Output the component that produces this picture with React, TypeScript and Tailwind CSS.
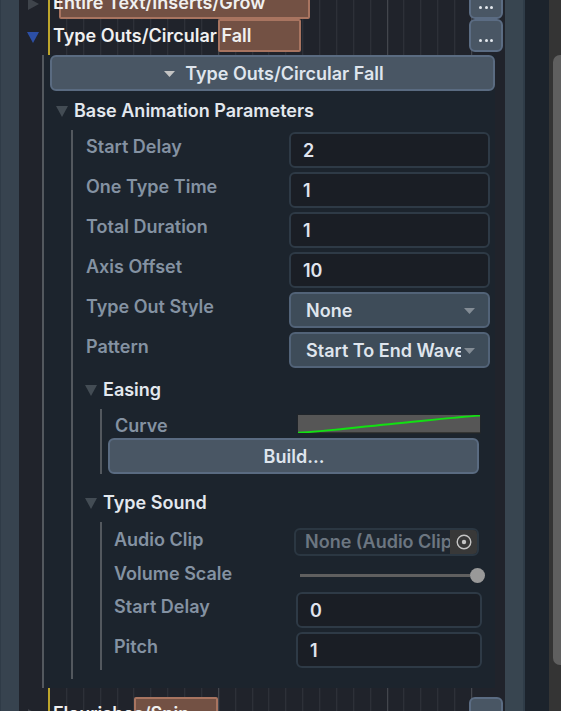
import type { ReactNode } from "react";
import clsx from "clsx";

const TICKS = 25;

function Grid() {
  return (
    <div className="absolute inset-y-0 left-[29px] flex w-[424px] border-l-2 border-[#bda52b]">
      {Array.from({ length: TICKS }).map((_, i) => (
        <div
          key={i}
          className={clsx(
            "flex-1",
            i === 9 || i === 19 || i === 24
              ? "border-r border-[#43464d] shadow-[1px_0_0_#282b33]"
              : "border-r border-[#2d3038] shadow-[1px_0_0_#24272f]"
          )}
        />
      ))}
    </div>
  );
}

function Arrow({ className, points, width, height }: { className: string; points: string; width: number; height: number }) {
  return (
    <svg className={clsx("shrink-0", className)} width={width} height={height} viewBox={`0 0 ${width} ${height}`}>
      <polygon points={points} fill="currentColor" />
    </svg>
  );
}

function MoreButton() {
  return (
    <div className="absolute top-0 right-0 flex h-full w-[34px] items-center justify-center gap-[2.5px] rounded-[6px] border-2 border-[#5b6c83] bg-[#495664] pt-2.5">
      <i className="size-[3px] rounded-full bg-[#e4e8ee]" />
      <i className="size-[3px] rounded-full bg-[#e4e8ee]" />
      <i className="size-[3px] rounded-full bg-[#e4e8ee]" />
    </div>
  );
}

interface TrackProps {
  name: string;
  open?: boolean;
  clipClass: string;
}

function Track({ name, open, clipClass }: TrackProps) {
  return (
    <div className="relative mr-[2px] h-[33px] shrink-0">
      <div className={clsx("absolute inset-y-0 rounded-[2px] border-2 border-[#a87460] bg-[#735144]", clipClass)} />
      <div className="relative flex h-full items-center pl-2">
        {open ? (
          <Arrow className="mt-1 text-[#2c4fa5]" width={12} height={11} points="0,0 12,0 6,11" />
        ) : (
          <Arrow className="mt-0.5 text-[#3f444b]" width={12} height={12} points="1,0 12,6 1,12" />
        )}
        <span className="ml-[14px] whitespace-nowrap text-[#f0f0f0]">{name}</span>
      </div>
      <MoreButton />
    </div>
  );
}

function Heading({ children }: { children: ReactNode }) {
  return (
    <div className="flex items-center gap-1.5 text-[#e3e8ee]">
      <Arrow className="text-[#434c54]" width={12} height={11} points="0,0 12,0 6,11" />
      {children}
    </div>
  );
}

function Row({ label, className, children }: { label: string; className?: string; children: ReactNode }) {
  return (
    <div className={clsx("flex justify-between", className ?? "h-[36px] pt-[3px]")}>
      <span className="leading-6 whitespace-nowrap text-[#8492a2]">{label}</span>
      {children}
    </div>
  );
}

function NumberField({ value, className }: { value: string; className: string }) {
  return (
    <div className={clsx("-mt-[3px] flex h-[36px] shrink-0 items-center rounded-[6px] border-2 border-[#2e3a46] bg-[#1a1e25] pt-0.5 pl-3 text-[#e0e4ee]", className)}>
      {value}
    </div>
  );
}

function Dropdown({ value }: { value: string }) {
  return (
    <div className="-mt-[3px] flex h-[36px] w-[201px] shrink-0 items-center rounded-[6px] border-2 border-[#526378] bg-[#3e4c59] pt-0.5 pl-[15px] text-[#dfe5ed]">
      <span className="w-[155px] overflow-hidden whitespace-nowrap">{value}</span>
      <Arrow className="-mt-px ml-[3px] text-[#838c95]" width={11} height={6} points="0,0 11,0 5.5,6" />
    </div>
  );
}

const fields = [
  ["Start Delay", "2"],
  ["One Type Time", "1"],
  ["Total Duration", "1"],
  ["Axis Offset", "10"],
];

export default function App() {
  return (
    <div className="flex h-[711px] w-[561px] overflow-hidden bg-[#1c232c] font-['Inter',sans-serif] text-[18px] leading-6 font-semibold">
      <div className="w-[19px] shrink-0 border-l border-[#2f3b47] bg-[#37434f]" />

      <div className="flex w-[486px] shrink-0 flex-col bg-[#20232b]">
        <div className="relative flex h-[55px] shrink-0 flex-col justify-end overflow-hidden pb-[3px]">
          <Grid />
          <Track name="Entire Text/Inserts/Grow" clipClass="left-[40px] w-[251px]" />
          <Track name="Type Outs/Circular Fall" open clipClass="left-[199px] w-[83px]" />
        </div>

        <div className="mr-[10px] ml-[23px] flex h-[633px] shrink-0 flex-col border-l-2 border-[#53585e] bg-[#1c242d] pl-1.5">
          <div className="flex h-[36px] shrink-0 items-center justify-center gap-[10px] rounded-[6px] border-2 border-[#5a6b81] bg-[#495664] pt-0.5 pl-[3px] text-[#dfe5ed]">
            <Arrow className="-mt-px text-[#c4c4c4]" width={11} height={6} points="0,0 11,0 5.5,6" />
            Type Outs/Circular Fall
          </div>
          <div className="mt-2 pl-1.5">
            <Heading>Base Animation Parameters</Heading>
          </div>

          <div className="mt-[7px] mr-[5px] ml-[21px] h-[549px] border-l-2 border-[#53585e] pt-0.5 pl-[13px]">
            <div className="flex flex-col gap-1">
              {fields.map(([label, value]) => (
                <Row key={label} label={label}>
                  <NumberField value={value} className="w-[201px]" />
                </Row>
              ))}
              <Row label="Type Out Style">
                <Dropdown value="None" />
              </Row>
              <Row label="Pattern">
                <Dropdown value="Start To End Wave" />
              </Row>
            </div>

            <div className="mt-[10px] -ml-px">
              <Heading>Easing</Heading>
            </div>
            <div className="mt-[7px] ml-[14px] h-[65px] border-l-2 border-[#53585e] pt-1">
              <Row label="Curve" className="h-[25px] pt-px pr-[10px] pl-[13px]">
                <svg className="mt-px bg-[#565656] shadow-[0_0_0_1px_#20252a]" width="182" height="18" viewBox="0 0 182 18">
                  <path d="M0 17.5H182" stroke="#343534" />
                  <path d="M0 17.7C25 16.5 60 12 91 9.2C125 6 155 2.5 182 0.6" fill="none" stroke="#12e012" strokeWidth="2" />
                </svg>
              </Row>
              <div className="mr-[11px] ml-1.5 flex h-[36px] items-center justify-center rounded-[6px] border-2 border-[#5a6b81] bg-[#495664] pt-0.5 pl-px text-[#dfe5ed]">
                Build...
              </div>
            </div>

            <div className="mt-[17px] -ml-px">
              <Heading>Type Sound</Heading>
            </div>
            <div className="mt-[7px] ml-[14px] h-[148px] border-l-2 border-[#53585e] pt-1.5 pl-[12px]">
              <Row label="Audio Clip" className="h-[30px] pr-[11px]">
                <div className="flex h-[28px] w-[185px] shrink-0 overflow-hidden rounded-[6px] border-2 border-[#2b3742] bg-[#1e262f]">
                  <span className="w-[154px] overflow-hidden pl-[9px] whitespace-nowrap text-[#6c7681]">None (Audio Clip)</span>
                  <div className="flex flex-1 items-center justify-center bg-[#383838] text-[#c4c4c4]">
                    <svg width="16" height="16" viewBox="0 0 16 16">
                      <circle cx="8" cy="8" r="6.8" fill="none" stroke="currentColor" strokeWidth="1.4" />
                      <circle cx="8" cy="8" r="2.2" fill="currentColor" />
                    </svg>
                  </div>
                </div>
              </Row>
              <Row label="Volume Scale" className="h-[34px] pt-1 pr-[5px]">
                <div className="mt-1.5 flex h-[15px] w-[185px] items-center">
                  <div className="h-[3px] flex-1 bg-[#5f5f5f]" />
                  <div className="size-[15px] rounded-full bg-[#999999]" />
                </div>
              </Row>
              <div className="flex flex-col gap-1 pr-2">
                <Row label="Start Delay">
                  <NumberField value="0" className="w-[186px]" />
                </Row>
                <Row label="Pitch">
                  <NumberField value="1" className="w-[186px]" />
                </Row>
              </div>
            </div>
          </div>
        </div>

        <div className="relative flex h-[23px] shrink-0 flex-col overflow-hidden pt-[9px]">
          <Grid />
          <Track name="Flourishes/Spin" clipClass="left-[115px] w-[84px]" />
        </div>
      </div>

      <div className="w-[20px] shrink-0 border-r-2 border-[#2f3c48] bg-[#384550]" />
      <div className="w-[24px] shrink-0" />
      <div className="w-[12px] shrink-0 overflow-hidden bg-[#343434] pt-[55px] pl-1">
        <div className="h-[610px] w-[14px] rounded-[7px] bg-[#5f5f5f]" />
      </div>
    </div>
  );
}
